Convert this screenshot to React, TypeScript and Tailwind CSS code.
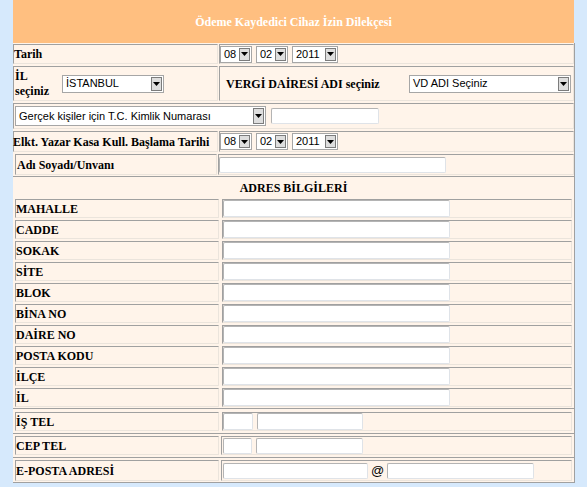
import React from "react";

const cell =
  "border border-t-[#a0a0a0] border-l-[#a0a0a0] border-r-[#ebe4dc] border-b-[#ebe4dc]";
const label =
  "font-['Liberation_Serif',serif] font-bold text-[12px] leading-none text-black whitespace-nowrap";
const sans = "font-['Liberation_Sans',Arial,sans-serif] text-[11px] text-black";

function Sel({ className, text }: { className: string; text: string }) {
  return (
    <div
      className={`flex items-stretch bg-white border border-[#a6a6a6] ${className}`}
    >
      <div className={`flex-1 flex items-center pl-[3px] overflow-hidden whitespace-nowrap ${sans}`}>
        {text}
      </div>
      <div className="m-[1px] w-[11px] flex items-center justify-center bg-[#dedede] border border-[#7c7c7c]">
        <svg width="7" height="4" viewBox="0 0 7 4">
          <path d="M0 0H7L3.5 4Z" fill="#000" />
        </svg>
      </div>
    </div>
  );
}

function Inp({ className }: { className: string }) {
  return (
    <div
      className={`bg-white border border-t-[#b4b4b4] border-l-[#b4b4b4] border-r-[#dfe3e8] border-b-[#dfe3e8] rounded-[2px] ${className}`}
    />
  );
}

const addr = [
  "MAHALLE",
  "CADDE",
  "SOKAK",
  "SİTE",
  "BLOK",
  "BİNA NO",
  "DAİRE NO",
  "POSTA KODU",
  "İLÇE",
  "İL",
];

function DateSels() {
  return (
    <div className="flex items-center gap-[4px] pl-[0px]">
      <Sel className="w-[32px] h-[17px]" text="08" />
      <Sel className="w-[32px] h-[17px]" text="02" />
      <Sel className="w-[46px] h-[17px]" text="2011" />
    </div>
  );
}

export default function App() {
  return (
    <div className="w-[587px] h-[487px] bg-[#d6e9fc] overflow-hidden">
      <div className="ml-[13px] w-[561px] h-[43px] bg-[#ffbf80] flex items-center justify-center">
        <span className="font-['Liberation_Serif',serif] font-bold text-[12px] text-white">
          Ödeme Kaydedici Cihaz İzin Dilekçesi
        </span>
      </div>
      <div className="ml-[13px] w-[562px] bg-[#fff4ea] border-r border-r-[#a0a0a0]">
        {/* Tarih */}
        <div className="flex h-[22px] py-[1px] gap-[1px]">
          <div className={`w-[205px] flex items-center ${cell}`}>
            <span className={label}>Tarih</span>
          </div>
          <div className={`flex-1 flex items-center ${cell}`}>
            <DateSels />
          </div>
        </div>
        {/* IL */}
        <div className="flex h-[37px] py-[1px] gap-[1px]">
          <div className={`w-[205px] flex items-center ${cell}`}>
            <div className="w-[48px] pl-[1px] flex flex-col gap-[3px]">
              <span className={label}>İL</span>
              <span className={label}>seçiniz</span>
            </div>
            <Sel className="w-[102px] h-[18px]" text="İSTANBUL" />
          </div>
          <div className={`flex-1 flex items-center justify-between pl-[6px] pr-[2px] ${cell}`}>
            <span className={label}>VERGİ DAİRESİ ADI seçiniz</span>
            <Sel className="w-[162px] h-[18px]" text="VD ADI Seçiniz" />
          </div>
        </div>
        {/* Gercek */}
        <div className="flex h-[28px] py-[1px]">
          <div className={`flex-1 flex items-center gap-[5px] pl-[1px] ${cell}`}>
            <Sel className="w-[251px] h-[20px]" text="Gerçek kişiler için T.C. Kimlik Numarası" />
            <Inp className="w-[108px] h-[16px]" />
          </div>
        </div>
        {/* Elkt */}
        <div className="flex h-[23px] py-[1px] gap-[1px]">
          <div className={`w-[205px] flex items-center ${cell}`}>
            <span className={`${label} -ml-[1px]`}>Elkt. Yazar Kasa Kull. Başlama Tarihi</span>
          </div>
          <div className={`flex-1 flex items-center ${cell}`}>
            <DateSels />
          </div>
        </div>
        {/* Adi */}
        <div className="flex h-[23px] py-[1px] pl-[2px] gap-[1px]">
          <div className={`w-[202px] flex items-center ${cell}`}>
            <span className={`${label} pl-[1px]`}>Adı Soyadı/Unvanı</span>
          </div>
          <div className={`flex-1 flex items-center ${cell}`}>
            <Inp className="w-[227px] h-[16px]" />
          </div>
        </div>
        {/* Adres */}
        <div className="h-[22px] flex items-center justify-center border-t border-t-[#a0a0a0]">
          <span className={label}>ADRES BİLGİLERİ</span>
        </div>
        <div className="flex flex-col gap-[2px] px-[2px] pt-[1px] pb-[1px] border-b border-b-[#a0a0a0]">
          {addr.map((a) => (
            <div key={a} className="flex h-[19px] gap-[3px]">
              <div className={`w-[204px] flex items-center ${cell}`}>
                <span className={label}>{a}</span>
              </div>
              <div className={`flex-1 ${cell}`}>
                <Inp className="w-[227px] h-[17px]" />
              </div>
            </div>
          ))}
        </div>
        {/* IS TEL */}
        <div className="px-[2px] pt-[3px] pb-[2px] border-b border-b-[#a0a0a0]">
          <div className="flex h-[19px] gap-[3px]">
            <div className={`w-[204px] flex items-center ${cell}`}>
              <span className={label}>İŞ TEL</span>
            </div>
            <div className={`flex-1 flex gap-[4px] ${cell}`}>
              <Inp className="w-[30px] h-[17px]" />
              <Inp className="w-[106px] h-[17px]" />
            </div>
          </div>
        </div>
        {/* CEP TEL */}
        <div className="px-[2px] pt-[2px] pb-[2px] border-b border-b-[#a0a0a0]">
          <div className="flex h-[19px] gap-[2px]">
            <div className={`w-[204px] flex items-center ${cell}`}>
              <span className={label}>CEP TEL</span>
            </div>
            <div className={`flex-1 flex items-center gap-[4px] pl-[1px] ${cell}`}>
              <Inp className="w-[29px] h-[16px]" />
              <Inp className="w-[107px] h-[16px]" />
            </div>
          </div>
        </div>
        {/* E-POSTA */}
        <div className="px-[2px] pt-[2px] pb-[1px] border-b border-b-[#a0a0a0]">
          <div className="flex h-[21px] gap-[2px]">
            <div className={`w-[204px] flex items-center ${cell}`}>
              <span className={label}>E-POSTA ADRESİ</span>
            </div>
            <div className={`flex-1 flex items-center pl-[1px] ${cell}`}>
              <Inp className="w-[145px] h-[16px]" />
              <span className="font-['Liberation_Sans',Arial,sans-serif] text-[13px] text-black mx-[3px] leading-none">
                @
              </span>
              <Inp className="w-[147px] h-[16px]" />
            </div>
          </div>
        </div>
      </div>
    </div>
  );
}
